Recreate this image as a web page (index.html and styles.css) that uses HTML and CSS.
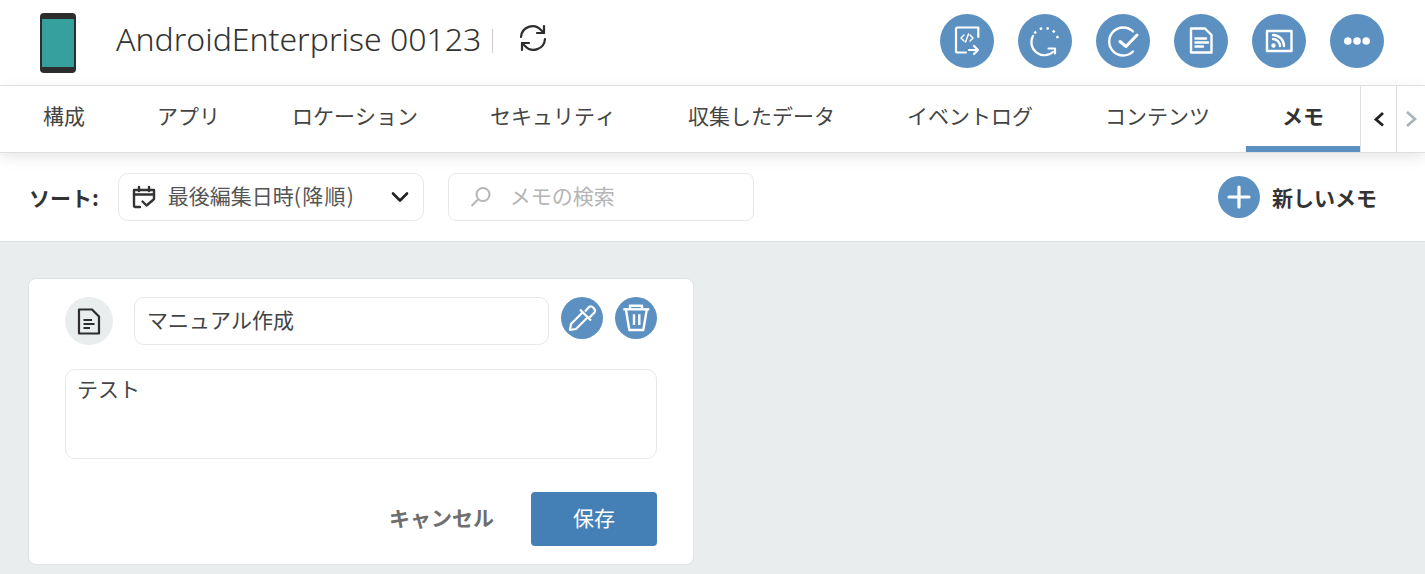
FILE: index.html
```html
<!DOCTYPE html>
<html lang="ja">
<head>
  <meta charset="UTF-8">
  <title>メモ</title>
  <link rel="stylesheet" href="styles.css">
</head>
<body>
  <header class="top">
    <svg class="phone" width="38" height="62" viewBox="0 0 38 62">
      <rect x="1" y="1" width="36" height="60" rx="4" fill="#2d2d2d"/>
      <rect x="3" y="7" width="32" height="48" fill="#35a09d"/>
    </svg>
    <div class="title">AndroidEnterprise 00123</div>
    <div class="title-sep"></div>
    <svg class="refresh" width="30" height="30" viewBox="0 0 30 30" fill="none" stroke="#2d2d2d" stroke-width="2.200" stroke-linecap="round" stroke-linejoin="round">
      <path d="M3 14a11.500 11.500 0 0 1 20-7l3 3"/>
      <path d="M26 3v7h-7"/>
      <path d="M27 16a11.500 11.500 0 0 1-20 7l-3-3"/>
      <path d="M4 27v-7h7"/>
    </svg>
    <div class="actions">
      <span class="round"><svg width="54" height="54" viewBox="0 0 54 54" fill="none" stroke="#fff" stroke-width="2.200" stroke-linecap="round" stroke-linejoin="round"><path d="M26 38.500h-8.500a1.500 1.500 0 0 1-1.500-1.500V15a1.500 1.500 0 0 1 1.500-1.500h20.800V23"/><path d="M24 21l-3 3 3 3M30 21l3 3-3 3M28.500 20l-3 8" stroke-width="1.500"/><path d="M29 36h9M34 32l4 4-4 4"/></svg></span>
      <span class="round"><svg width="54" height="54" viewBox="0 0 54 54" fill="none" stroke="#fff" stroke-width="2.200" stroke-linecap="round" stroke-linejoin="round"><path d="M15 22a13 13 0 0 0 20 16"/><path d="M16.500 19.500A13 13 0 0 1 40 26" stroke-linecap="butt" stroke-dasharray="2.500 4.300" stroke-width="2.400"/><path d="M30.500 34.500H37v5"/></svg></span>
      <span class="round"><svg width="54" height="54" viewBox="0 0 54 54" fill="none" stroke="#fff" stroke-width="2.400" stroke-linecap="round" stroke-linejoin="round"><path d="M37 17.500a14 14 0 1 0 0 20"/><path d="M24 27.500l6 5 11-11.500" stroke-width="3"/></svg></span>
      <span class="round"><svg width="54" height="54" viewBox="0 0 54 54" fill="none" stroke="#fff" stroke-width="2.400" stroke-linecap="round" stroke-linejoin="round"><path d="M17 14.500h14l6.500 6.500v17.500H17z"/><path d="M21.500 24.500H32M21.500 28.500H34M21.500 32.500H29"/></svg></span>
      <span class="round"><svg width="54" height="54" viewBox="0 0 54 54" fill="none" stroke="#fff" stroke-width="2.400" stroke-linecap="round" stroke-linejoin="round"><rect x="15" y="17" width="24.500" height="20"/><path d="M21 25a7 7 0 0 1 7 7M21 21a11 11 0 0 1 11 11"/><circle cx="21.500" cy="31.500" r="1" fill="#fff"/></svg></span>
      <span class="round"><svg width="54" height="54" viewBox="0 0 54 54" fill="#fff"><circle cx="17.800" cy="27" r="3.800"/><circle cx="27" cy="27" r="3.800"/><circle cx="36.200" cy="27" r="3.800"/></svg></span>
    </div>
  </header>

  <nav class="tabs">
    <a class="tab">構成</a>
    <a class="tab">アプリ</a>
    <a class="tab">ロケーション</a>
    <a class="tab">セキュリティ</a>
    <a class="tab">収集したデータ</a>
    <a class="tab">イベントログ</a>
    <a class="tab">コンテンツ</a>
    <a class="tab active">メモ</a>
    <span class="tab-arrow"><svg width="14" height="18" viewBox="0 0 14 18" fill="none" stroke="#222" stroke-width="2.800"><path d="M11 3L4 9.500l7 6"/></svg></span>
    <span class="tab-arrow last"><svg width="12" height="18" viewBox="0 0 12 18" fill="none" stroke="#aab5ba" stroke-width="2.800"><path d="M2 2l8 7-8 7"/></svg></span>
  </nav>

  <section class="toolbar">
    <span class="sort-label">ソート:</span>
    <div class="sort-select">
      <svg width="24" height="24" viewBox="0 0 24 24" fill="none" stroke="#333" stroke-width="2.400" stroke-linecap="round" stroke-linejoin="round"><path d="M8 22H3.500a1.500 1.500 0 0 1-1.500-1.500V5h20v9"/><path d="M2 9.500h20M7 2v4M17 2v4"/><path d="M10.500 16.500l4 4 6.500-5.500"/></svg>
      <span class="sort-text">最後編集日時<span class="sort-dir">(降順)</span></span>
      <svg class="chev" width="18" height="12" viewBox="0 0 18 12" fill="none" stroke="#222" stroke-width="2.600" stroke-linecap="round" stroke-linejoin="round"><path d="M2 2.500l7 7 7-7"/></svg>
    </div>
    <div class="search">
      <svg width="26" height="26" viewBox="0 0 26 26" fill="none" stroke="#b5b5b5" stroke-width="2"><circle cx="15" cy="10.500" r="6.500"/><path d="M10 15.500L3.500 22"/></svg>
      <span>メモの検索</span>
    </div>
    <div class="new-memo">
      <span class="plus"><svg width="24" height="24" viewBox="0 0 24 24" stroke="#fff" stroke-width="3.200" stroke-linecap="round"><path d="M12 2v20M2 12h20"/></svg></span>
      <span>新しいメモ</span>
    </div>
  </section>

  <main class="content">
    <div class="card">
      <div class="card-head">
        <span class="doc-icon"><svg width="26" height="28" viewBox="0 0 26 28" fill="none" stroke="#2d2d2d" stroke-width="2.200" stroke-linejoin="round"><path d="M3 2.500h13l7 7v17H3z"/><path d="M7.500 13H16M7.500 17h11M7.500 21H14"/></svg></span>
        <div class="memo-title">マニュアル作成</div>
        <span class="tool"><svg width="42" height="42" viewBox="0 0 42 42" fill="none" stroke="#fff" stroke-width="2.200" stroke-linejoin="round"><path d="M22 15L10 27l-1 6 6-1 12-12"/><path d="M19 12.500L30 23.500"/><path d="M24 14.500l4-4.500c2.500-2.300 7.500 2.500 5.500 5.500l-5 5"/></svg></span>
        <span class="tool"><svg width="42" height="42" viewBox="0 0 42 42" fill="none" stroke="#fff" stroke-width="2.400" stroke-linejoin="round"><path d="M8.300 12.300h26"/><path d="M15 12V8.700h12V12"/><path d="M11 13l3.300 20h14l3.400-20"/><path d="M19 17.300V28M24.300 17.300V28"/></svg></span>
      </div>
      <div class="memo-body">テスト</div>
      <div class="card-foot">
        <button class="btn-cancel">キャンセル</button>
        <button class="btn-save">保存</button>
      </div>
    </div>
  </main>
</body>
</html>
```
FILE: styles.css
```css
* { box-sizing: border-box; }
html, body { height: 100%; }
body { margin: 0; background: #e9edee; color: #333; font-family: "Noto Sans CJK JP", "Noto Sans", sans-serif; font-kerning: none; overflow: hidden; }

.top { display: flex; align-items: center; height: 86px; background: #fff; border-bottom: 1px solid #e4e6e7; padding-left: 39px; }
.phone { margin-right: 39px; }
.title { font-family: "Noto Sans", "Noto Sans CJK JP", sans-serif; font-size: 32px; font-weight: 300; color: #333; padding-bottom: 9px; }
.title-sep { width: 1px; height: 24px; background: #ccc; margin: 0 25px 4px 11px; }
.refresh { margin-bottom: 9px; }
.actions { display: flex; gap: 24px; margin-left: auto; margin-right: 41px; padding-bottom: 4px; }
.round { display: flex; align-items: center; justify-content: center; width: 54px; height: 54px; border-radius: 50%; background: #5b90c1; }

.tabs { position: relative; display: flex; height: 67px; background: #fff; padding-left: 7px; border-bottom: 1px solid #dcdfe0; box-shadow: 0 4px 14px rgba(0,0,0,.1); }
.tab { display: flex; align-items: center; padding: 0 36px 8px; font-size: 21px; color: #444; }
.tab.active { font-weight: 700; color: #333; padding-bottom: 2px; border-bottom: 6px solid #5b90c1; }
.tab-arrow { display: flex; align-items: center; justify-content: center; width: 36px; border-left: 1px solid #dcdfe0; }
.tab-arrow.last { width: 29px; }

.toolbar { display: flex; align-items: center; height: 89px; background: #fff; border-bottom: 1px solid #e0e3e4; padding: 0 48px 0 29px; }
.sort-label { font-size: 21px; font-weight: 700; margin-right: 19px; }
.sort-select { display: flex; align-items: center; width: 306px; height: 48px; padding: 0 14px 0 13px; border: 1px solid #e6e8e9; border-radius: 10px; }
.sort-text { font-size: 21px; color: #555; margin-left: 12px; padding-bottom: 4px; }
.sort-dir { letter-spacing: 1.250px; }
.chev { margin-left: auto; }
.search { display: flex; align-items: center; width: 306px; height: 48px; margin-left: 24px; padding-left: 19px; border: 1px solid #e6e8e9; border-radius: 8px; font-size: 21px; color: #b5b5b5; }
.search span { margin-left: 16px; padding-bottom: 4px; }
.new-memo { display: flex; align-items: center; margin-left: auto; gap: 12px; font-size: 21px; font-weight: 700; }
.plus { display: flex; align-items: center; justify-content: center; width: 42px; height: 42px; border-radius: 50%; background: #5b90c1; }

.content { padding: 36px 28px; }
.card { width: 666px; height: 287px; background: #fff; border: 1px solid #e0e3e4; border-radius: 8px; padding: 18px 36px 0; }
.card-head { display: flex; align-items: flex-start; }
.doc-icon { display: flex; align-items: center; justify-content: center; width: 48px; height: 48px; border-radius: 50%; background: #e9edee; margin-right: 21px; }
.memo-title { width: 415px; height: 48px; line-height: 42px; padding-left: 12px; border: 1px solid #e6e8e9; border-radius: 10px; font-size: 21px; color: #444; margin-right: 12px; }
.tool { display: flex; align-items: center; justify-content: center; width: 42px; height: 42px; border-radius: 50%; background: #5b90c1; margin-right: 12px; }
.tool:last-child { margin-right: 0; }
.memo-body { height: 90px; margin-top: 24px; padding: 2px 11px; border: 1px solid #e6e8e9; border-radius: 10px; font-size: 21px; line-height: 32px; color: #444; }
.card-foot { display: flex; justify-content: flex-end; align-items: center; margin-top: 33px; }
.btn-cancel { background: none; border: 0; padding: 0 0 5px; font: inherit; font-size: 21px; font-weight: 700; color: #6e6e6e; margin-right: 37px; }
.btn-save { width: 126px; height: 54px; padding-bottom: 6px; background: #447fb6; border: 0; border-radius: 4px; font: inherit; font-size: 21px; color: #fff; }
```
